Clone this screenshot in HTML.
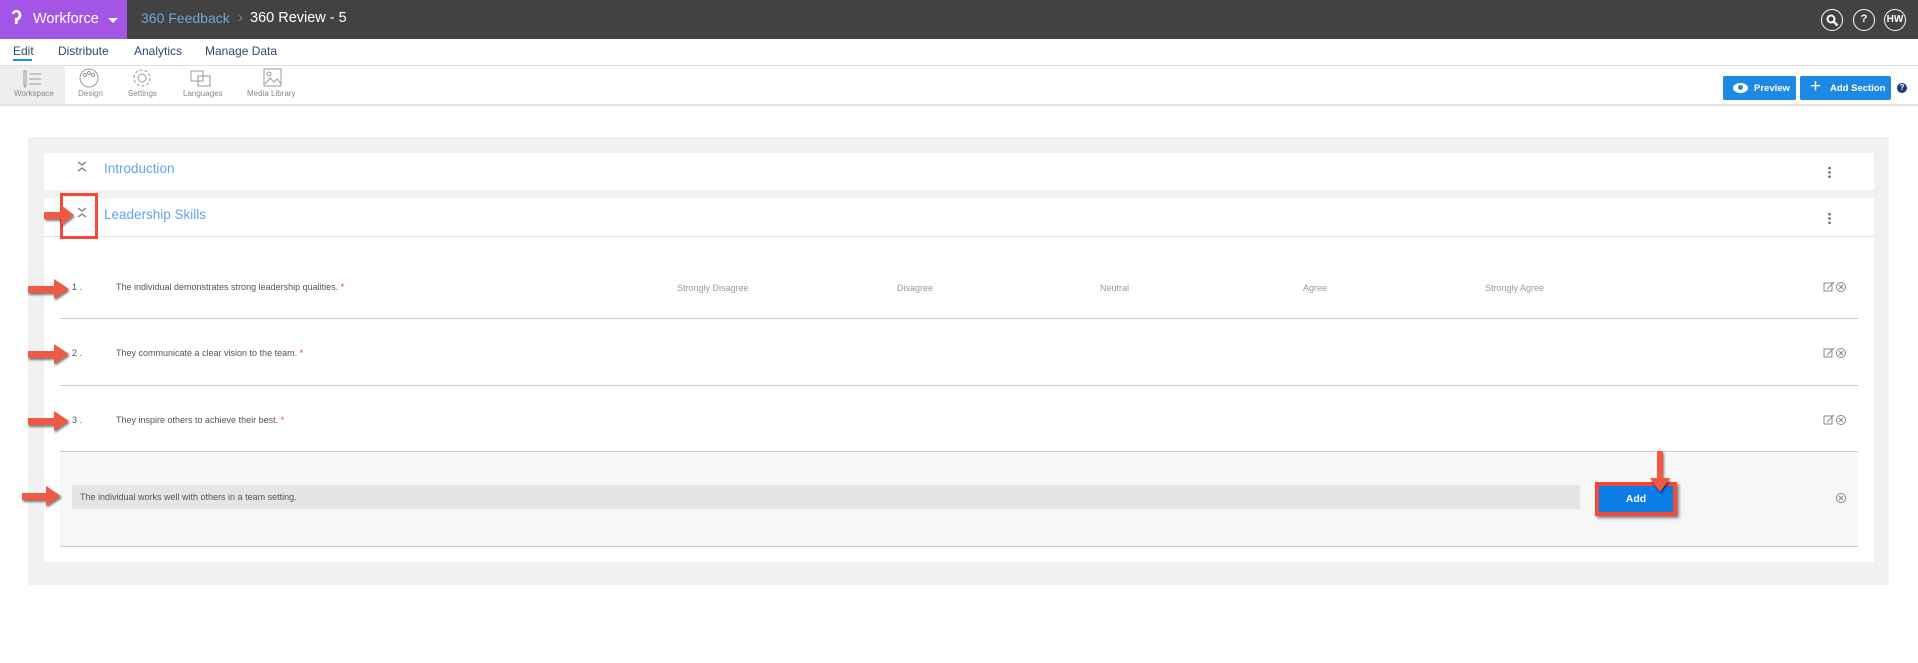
<!DOCTYPE html>
<html><head><meta charset="utf-8"><style>
*{box-sizing:border-box;margin:0;padding:0}
body{width:1918px;height:663px;background:#fff;font-family:"Liberation Sans",sans-serif;position:relative;overflow:hidden}
.a{position:absolute}
.top{left:0;top:0;width:1918px;height:39px;background:#424242}
.purple{left:0;top:0;width:127px;height:39px;background:#a355e6}
.t{white-space:nowrap}
.nav{font-size:12px;color:#2d4a70;top:44px}
.tb{font-size:8px;color:#888;top:89px}
.lbl{font-size:9px;color:#999;top:283px}
.q{font-size:9px;color:#555}
.star{color:#e53935}
.line{height:1px;background:#ccc}
.btn{background:#1e88e5;border-radius:2px;color:#fff;font-size:9.5px;font-weight:bold}
.circ{width:22px;height:22px;border:1.5px solid #fff;border-radius:50%;color:#fff;font-weight:bold;font-size:11px;text-align:center;line-height:19px}
</style></head><body>
<div class="a top"></div>
<div class="a purple"></div>
<div class="a t" style="left:11px;top:7px;color:#fff;font-size:20px;font-weight:bold">&#x0294;</div>
<div class="a t" style="left:33px;top:11px;color:#fff;font-size:14.5px">Workforce</div>
<div class="a" style="left:108px;top:18px;border-left:5px solid transparent;border-right:5px solid transparent;border-top:5px solid #fff"></div>
<div class="a t" style="left:141px;top:10px;color:#6fa8d8;font-size:14px">360 Feedback</div>
<div class="a t" style="left:238px;top:9px;color:#888;font-size:15px">›</div>
<div class="a t" style="left:250px;top:10px;color:#fff;font-size:14.5px">360 Review - 5</div>
<div class="a circ" style="left:1821px;top:9px"></div>
<svg class="a" style="left:1821px;top:9px" width="22" height="22"><circle cx="10" cy="10" r="3.5" fill="none" stroke="#fff" stroke-width="2"/><path d="M12.5 12.5l4 4" stroke="#fff" stroke-width="2.5"/></svg>
<div class="a circ" style="left:1853px;top:9px">?</div>
<div class="a circ" style="left:1884px;top:9px;font-size:10px">HW</div>

<div class="a t nav" style="left:13px">Edit</div>
<div class="a" style="left:13px;top:59px;width:19px;height:2px;background:#1e88e5"></div>
<div class="a t nav" style="left:58px">Distribute</div>
<div class="a t nav" style="left:134px">Analytics</div>
<div class="a t nav" style="left:205px">Manage Data</div>
<div class="a line" style="left:0;top:65px;width:1918px;background:#ddd"></div>

<div class="a" style="left:0;top:66px;width:65px;height:38px;background:#eee"></div>
<div class="a" style="left:0;top:104px;width:1918px;height:2px;background:#e4e4e4"></div>
<svg class="a" style="left:0;top:66px" width="300" height="25" fill="none" stroke="#999" stroke-width="1">
<path d="M24 5v14l1 2 1-2V5zM29 8h12M29 13h12M29 18h12"/>
<circle cx="89" cy="12" r="9"/><circle cx="85" cy="9" r="1.5"/><circle cx="89" cy="7" r="1.5"/><circle cx="93" cy="9" r="1.5"/>
<circle cx="142" cy="12" r="4"/><circle cx="142" cy="12" r="8" stroke-dasharray="3 2"/>
<rect x="191" y="5" width="12" height="10"/><rect x="198" y="10" width="12" height="10"/>
<rect x="264" y="3" width="17" height="17"/><path d="M265 18l5-6 4 4 3-3 4 5"/><circle cx="269" cy="8" r="2"/>
</svg>
<div class="a t tb" style="left:14px">Workspace</div>
<div class="a t tb" style="left:78px">Design</div>
<div class="a t tb" style="left:128px">Settings</div>
<div class="a t tb" style="left:183px">Languages</div>
<div class="a t tb" style="left:247px">Media Library</div>

<div class="a btn t" style="left:1723px;top:76px;width:73px;height:24px;padding:7px 0 0 31px">Preview</div>
<div class="a" style="left:1733px;top:83px;width:15px;height:10px;border-radius:50%;background:#fff"></div>
<div class="a" style="left:1738px;top:85px;width:5px;height:5px;border-radius:50%;background:#1e88e5"></div>
<div class="a btn t" style="left:1800px;top:76px;width:91px;height:24px;padding:7px 0 0 30px">Add Section</div>
<div class="a t" style="left:1810px;top:76px;color:#fff;font-size:19px">+</div>
<div class="a" style="left:1897px;top:83px;width:10px;height:10px;border-radius:50%;background:#1a3a70;color:#fff;font-size:8px;font-weight:bold;text-align:center;line-height:10px">?</div>

<div class="a" style="left:28px;top:137px;width:1861px;height:448px;background:#f1f1f1"></div>
<div class="a" style="left:44px;top:153px;width:1830px;height:37px;background:#fff"></div>
<div class="a t" style="left:104px;top:161px;color:#5ea5ea;font-size:13.5px">Introduction</div>
<div class="a" style="left:44px;top:198px;width:1830px;height:364px;background:#fff"></div>
<div class="a t" style="left:104px;top:207px;color:#5ea5ea;font-size:13.5px">Leadership Skills</div>
<div class="a line" style="left:44px;top:236px;width:1830px;background:#e3e3e3"></div>
<svg class="a" style="left:0;top:150px" width="120" height="100" fill="none" stroke="#777" stroke-width="1.2">
<path d="M78 12l4 3 4-3M78 21l4-3 4 3M78 58l4 3 4-3M78 67l4-3 4 3"/>
</svg>
<div class="a" style="left:1828px;top:166px;width:3px;height:13px;background:radial-gradient(circle,#666 1.2px,transparent 1.4px) 0 0/3px 4.3px"></div>
<div class="a" style="left:1828px;top:212px;width:3px;height:13px;background:radial-gradient(circle,#666 1.2px,transparent 1.4px) 0 0/3px 4.3px"></div>

<div class="a t q" style="left:72px;top:282px">1 .</div>
<div class="a t q" style="left:116px;top:282px">The individual demonstrates strong leadership qualities. <span class="star">*</span></div>
<div class="a t lbl" style="left:677px">Strongly Disagree</div>
<div class="a t lbl" style="left:897px">Disagree</div>
<div class="a t lbl" style="left:1100px">Neutral</div>
<div class="a t lbl" style="left:1303px">Agree</div>
<div class="a t lbl" style="left:1485px">Strongly Agree</div>
<div class="a line" style="left:60px;top:318px;width:1798px"></div>
<div class="a t q" style="left:72px;top:348px">2 .</div>
<div class="a t q" style="left:116px;top:348px">They communicate a clear vision to the team. <span class="star">*</span></div>
<div class="a line" style="left:60px;top:385px;width:1798px"></div>
<div class="a t q" style="left:72px;top:415px">3 .</div>
<div class="a t q" style="left:116px;top:415px">They inspire others to achieve their best. <span class="star">*</span></div>
<div class="a line" style="left:60px;top:451px;width:1798px"></div>
<div class="a" style="left:60px;top:452px;width:1798px;height:94px;background:#f7f7f7"></div>
<div class="a line" style="left:60px;top:546px;width:1798px"></div>
<div class="a" style="left:72px;top:485px;width:1508px;height:24px;background:#e5e5e5"></div>
<div class="a t q" style="left:80px;top:492px">The individual works well with others in a team setting.</div>
<div class="a" style="left:1595px;top:482px;width:82px;height:34px;background:#f04a3c;box-shadow:2px 2px 3px rgba(0,0,0,.5)"></div>
<div class="a" style="left:1599px;top:486px;width:74px;height:26px;background:#0a7ce6;color:#fff;font-size:10.5px;font-weight:bold;text-align:center;line-height:26px">Add</div>

<svg class="a" style="left:0;top:0" width="1918" height="663">
<g fill="none" stroke="#888" stroke-width="1">
<rect x="1824" y="283" width="8" height="8"/><path d="M1827 289l7-7"/><circle cx="1841" cy="287" r="4.5"/>
<rect x="1824" y="349" width="8" height="8"/><path d="M1827 355l7-7"/><circle cx="1841" cy="353" r="4.5"/>
<rect x="1824" y="416" width="8" height="8"/><path d="M1827 422l7-7"/><circle cx="1841" cy="420" r="4.5"/>
<circle cx="1841" cy="498" r="4.5"/>
<path d="M1839 285l4 4M1843 285l-4 4M1839 351l4 4M1843 351l-4 4M1839 418l4 4M1843 418l-4 4M1839 496l4 4M1843 496l-4 4"/>
</g>
<rect x="61.5" y="194.5" width="35" height="43" fill="none" stroke="#f04a3c" stroke-width="3"/>
<g fill="#f05a45" style="filter:drop-shadow(1px 2px 1px rgba(0,0,0,.5))">
<path d="M44 212h17v-7l13 10-13 10v-6h-17z"/>
<path d="M28 286h26v-7l15 10-15 10v-6h-26z"/>
<path d="M28 351h26v-7l15 10-15 10v-6h-26z"/>
<path d="M28 418h26v-7l15 10-15 10v-6h-26z"/>
<path d="M22 493h24v-7l15 10-15 10v-6h-24z"/>
<path d="M1657 451v27h-7l10 14 10-14h-7v-27z"/>
</g>
</svg>
</body></html>
